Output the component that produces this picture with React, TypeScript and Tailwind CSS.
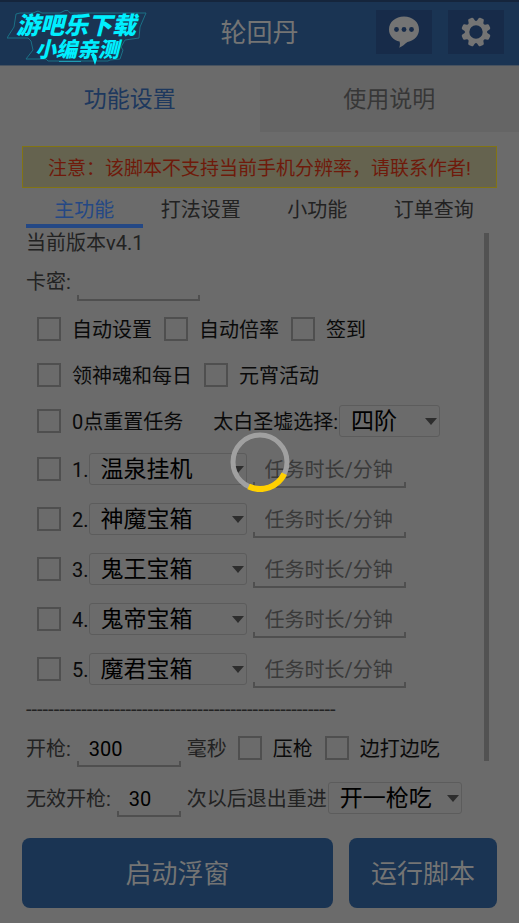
import React, { useState } from 'react';

interface CheckItemProps {
    id: string;
    label: string;
}

interface SelectBoxProps {
    label: string;
    options: string[];
    defaultValue: string;
    className: string;
}

interface LineInputProps {
    id: string;
    label?: string;
    defaultValue?: string;
    placeholder?: string;
    className: string;
}

const TABS = ['主功能', '打法设置', '小功能', '订单查询'];
const TASKS = ['温泉挂机', '神魔宝箱', '鬼王宝箱', '鬼帝宝箱', '魔君宝箱'];

function CheckItem({ id, label }: CheckItemProps) {
    return (
        <div className="flex items-center gap-[11px] text-[#0a0a0a]">
            <input
                id={id}
                type="checkbox"
                className="h-6 w-6 shrink-0 appearance-none border-2 border-[#4f4f4f] checked:bg-[#1a3453]"
            />
            <label htmlFor={id} className="pt-[2px] whitespace-nowrap">
                {label}
            </label>
        </div>
    );
}

function SelectBox({ label, options, defaultValue, className }: SelectBoxProps) {
    return (
        <div className={`relative shrink-0 ${className}`}>
            <select
                aria-label={label}
                defaultValue={defaultValue}
                className="block h-8 w-full appearance-none rounded-[3px] border border-[#5c5c5c] bg-transparent pt-[2px] pl-[11px] text-[23px] leading-7 text-black"
            >
                {options.map((option) => (
                    <option key={option}>{option}</option>
                ))}
            </select>
            <svg viewBox="0 0 12 7" className="pointer-events-none absolute top-[13px] right-[3px] h-[7px] w-3">
                <path d="M0 0h12L6 7z" fill="#2d2d2d" />
            </svg>
        </div>
    );
}

function LineInput({ id, label, defaultValue, placeholder, className }: LineInputProps) {
    return (
        <div className={`shrink-0 ${className}`}>
            <input
                id={id}
                aria-label={label}
                type="text"
                defaultValue={defaultValue}
                placeholder={placeholder}
                className="block h-8 w-full bg-transparent pt-2 pl-3 text-xl leading-6 text-black outline-none placeholder:text-[#3a3a3a]"
            />
            <div className="h-[6px] border-x-2 border-b-2 border-[#4f4f4f]" />
        </div>
    );
}

function Logo() {
    return (
        <div className="relative h-[55px] w-[140px] text-[#00efff] italic">
            <svg viewBox="0 0 140 55" className="absolute inset-0 h-full w-full" fill="none">
                <path
                    d="M0 28L7 17L9 4L13 3H26L31 1L35 3H53L58 .5H61L63 3H139L133 17L132 28L118 30L114 37L116 40L113 49L103 50L101 51H41L39 49H19L26 40L24 31L21 28z"
                    stroke="#1b7086"
                    strokeWidth="1"
                />
                <path d="M52 51.500h22" stroke="#1f9db4" />
                <path d="M84 44l5 1 1 4-2 6z" fill="#00efff" />
            </svg>
            <div className="relative flex flex-col pt-1 font-black whitespace-nowrap">
                <span className="pl-[9px] text-2xl leading-6">游吧乐下载</span>
                <span className="pl-7 text-[21px] leading-6">小编亲测</span>
            </div>
        </div>
    );
}

function Spinner() {
    return (
        <div role="status" aria-label="加载中" className="pointer-events-none fixed inset-0 flex items-center justify-center">
            <svg viewBox="0 0 60 60" className="h-[60px] w-[60px]" fill="none" strokeWidth="5">
                <circle cx="30" cy="30" r="27" stroke="#a3a3a3" strokeOpacity="0.95" />
                <path d="M54.3 41.8A27 27 0 0 1 18.6 54.5" stroke="#ffd000" strokeWidth="6" />
            </svg>
        </div>
    );
}

export default function App() {
    const [active, setActive] = useState(0);

    return (
        <div className="min-h-screen bg-[#6b6b6b] pb-[15px] font-['Roboto','Noto_Sans_CJK_SC',sans-serif] text-xl text-[#222222]">
            <header className="grid h-[66px] grid-cols-[1fr_auto_1fr] items-start border-t-2 border-b border-t-[#15253c] border-b-[#47525f] bg-[#1a3453] pt-2 text-[#747474]">
                <div className="pl-[7px]">
                    <Logo />
                </div>
                <h1 className="pt-[7px] text-[26px] leading-8">轮回丹</h1>
                <div className="flex justify-end gap-4 pr-[15px]">
                    <button type="button" aria-label="消息" className="flex h-11 w-14 items-center justify-center bg-[#172b49]">
                        <svg viewBox="0 0 30 32" className="h-8 w-[30px]">
                            <path
                                d="M15 .5C6.500 .5 0 6 0 13.500c0 6 4.300 10.600 10.600 12.100.6 2.300.4 4.100-.4 6.100 3.500-1.200 5.300-3.500 8.300-5.600C25.600 24.200 30 19.800 30 13.500 30 6 23.500.5 15 .5z"
                                fill="#747474"
                            />
                            <g fill="#172b49">
                                <circle cx="7.500" cy="13.500" r="2.400" />
                                <circle cx="15" cy="13.500" r="2.400" />
                                <circle cx="22.500" cy="13.500" r="2.400" />
                            </g>
                        </svg>
                    </button>
                    <button type="button" aria-label="设置" className="flex h-11 w-14 items-center justify-center bg-[#172b49]">
                        <svg viewBox="-15 -15 30 30" className="h-[30px] w-[30px]" fill="#747474">
                            <path
                                fillRule="evenodd"
                                d="M0-11A11 11 0 1 0 0 11 11 11 0 1 0 0-11zM0-6.700A6.700 6.700 0 1 1 0 6.700 6.700 6.700 0 1 1 0-6.700z"
                            />
                            {[22.5, 67.5, 112.5, 157.5, 202.5, 247.5, 292.5, 337.5].map((angle) => (
                                <path
                                    key={angle}
                                    d="M-4.400-9.500Q-3-11-2.800-13.600Q-2.600-14.600-1.600-14.700H1.600Q2.600-14.600 2.800-13.600Q3-11 4.400-9.500z"
                                    transform={`rotate(${angle})`}
                                />
                            ))}
                        </svg>
                    </button>
                </div>
            </header>

            <nav className="grid h-[66px] grid-cols-2 text-[23px]">
                <button type="button" className="pt-[2px] text-[#1d385e]">
                    功能设置
                </button>
                <button type="button" className="bg-[#656565] pt-[2px] text-[#373737]">
                    使用说明
                </button>
            </nav>

            <main className="px-[22px] pt-[14px]">
                <p
                    role="alert"
                    className="flex h-[42px] items-center justify-center border border-[#827413] bg-[#65634f] pt-1 text-[19px] whitespace-nowrap text-[#6f1a0b]"
                >
                    注意：该脚本不支持当前手机分辨率，请联系作者!
                </p>

                <div role="tablist" className="grid grid-cols-4 pr-[5px] pl-1">
                    {TABS.map((tab, index) => (
                        <button
                            key={tab}
                            type="button"
                            role="tab"
                            aria-selected={active === index}
                            onClick={() => setActive(index)}
                            className={`h-10 border-b-4 pt-2 leading-7 ${
                                active === index ? 'border-[#244885] text-[#244885]' : 'border-transparent'
                            }`}
                        >
                            {tab}
                        </button>
                    ))}
                </div>

                <div className="flex pr-2 pl-1">
                    <div className="min-w-0 flex-1">
                        <p className="h-[30px] leading-[30px]">当前版本v4.1</p>

                        <div className="flex h-12 items-center gap-[6px]">
                            <label htmlFor="card-key">卡密:</label>
                            <LineInput id="card-key" className="w-[123px]" />
                        </div>

                        <div className="flex h-[46px] items-center gap-3 pl-[11px]">
                            <CheckItem id="auto-setup" label="自动设置" />
                            <CheckItem id="auto-rate" label="自动倍率" />
                            <CheckItem id="sign-in" label="签到" />
                        </div>
                        <div className="flex h-[46px] items-center gap-3 pl-[11px]">
                            <CheckItem id="soul-daily" label="领神魂和每日" />
                            <CheckItem id="lantern" label="元宵活动" />
                        </div>
                        <div className="flex h-[46px] items-center pl-[11px] text-[#0a0a0a]">
                            <CheckItem id="midnight-reset" label="0点重置任务" />
                            <span className="pt-[2px] pr-px pl-[30px] whitespace-nowrap">太白圣墟选择:</span>
                            <SelectBox label="太白圣墟选择" options={['一阶', '二阶', '三阶', '四阶']} defaultValue="四阶" className="w-[101px]" />
                        </div>

                        {TASKS.map((task, index) => (
                            <div key={task} className="flex h-[50px] items-center pl-[11px]">
                                <CheckItem id={`task-${index}`} label={`${index + 1}.`} />
                                <SelectBox label={`任务${index + 1}`} options={TASKS} defaultValue={task} className="w-[158px]" />
                                <div className="pl-[6px]">
                                    <LineInput
                                        id={`duration-${index}`}
                                        label={`任务${index + 1}时长`}
                                        placeholder="任务时长/分钟"
                                        className="w-[153px]"
                                    />
                                </div>
                            </div>
                        ))}

                        <p className="h-[29px] leading-[30px] whitespace-nowrap">{'-'.repeat(56)}</p>

                        <div className="flex h-[50px] items-center gap-[6px]">
                            <label htmlFor="fire-delay" className="pt-[2px]">
                                开枪:
                            </label>
                            <LineInput id="fire-delay" defaultValue="300" className="w-[104px]" />
                            <span className="pt-[2px]">毫秒</span>
                            <div className="flex gap-3 pl-[5px]">
                                <CheckItem id="hold-gun" label="压枪" />
                                <CheckItem id="eat-fight" label="边打边吃" />
                            </div>
                        </div>
                        <div className="flex h-[50px] items-center whitespace-nowrap">
                            <label htmlFor="invalid-shots" className="pt-[2px] pr-[6px]">
                                无效开枪:
                            </label>
                            <LineInput id="invalid-shots" defaultValue="30" className="w-16" />
                            <span className="pt-[2px] pr-px pl-[6px]">次以后退出重进</span>
                            <SelectBox label="重进方式" options={['开一枪吃', '直接吃']} defaultValue="开一枪吃" className="w-[134px]" />
                        </div>
                    </div>
                    <div className="mt-[5px] h-[528px] w-[5px] bg-[#525252]" />
                </div>

                <div className="mt-[15px] grid grid-cols-[21fr_10fr] gap-4 text-[26px] text-[#747474]">
                    <button type="button" className="h-[70px] rounded-lg bg-[#1a3453] pt-[2px]">
                        启动浮窗
                    </button>
                    <button type="button" className="h-[70px] rounded-lg bg-[#1a3453] pt-[2px]">
                        运行脚本
                    </button>
                </div>
            </main>

            <Spinner />
        </div>
    );
}
